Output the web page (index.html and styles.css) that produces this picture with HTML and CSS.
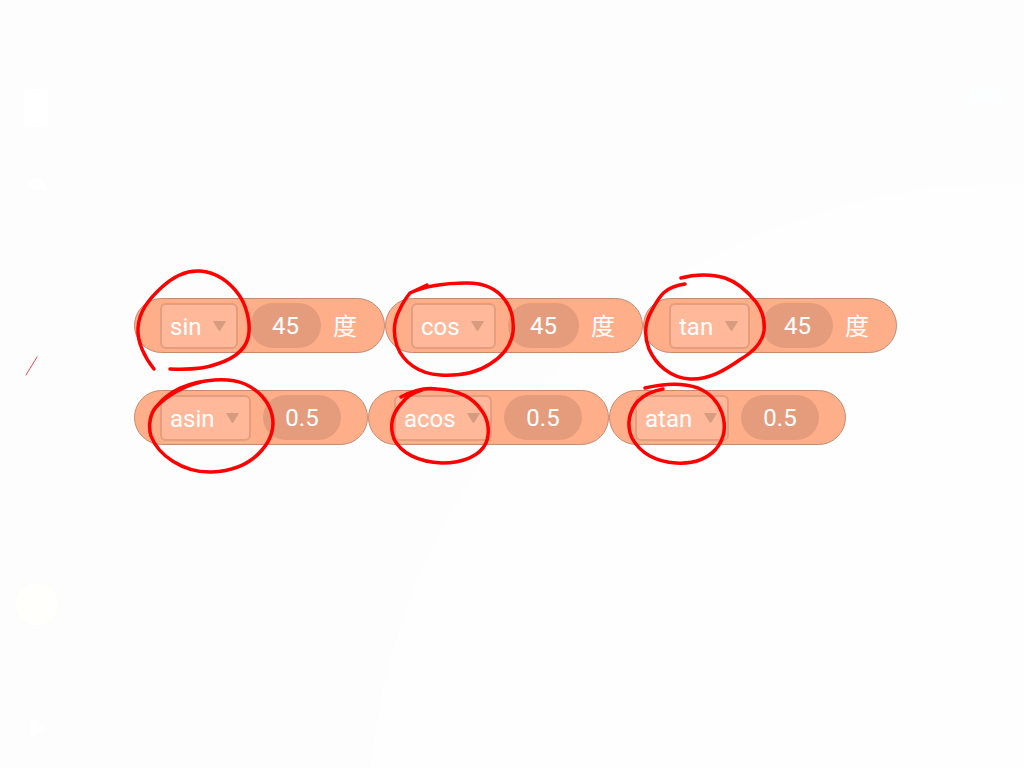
FILE: index.html
```html
<!DOCTYPE html>
<html lang="zh-CN">
<head>
    <meta charset="utf-8">
    <title>sin cos tan</title>
    <link rel="stylesheet" href="styles.css">
</head>
<body>
    <main class="workspace">
        <svg class="backdrop" width="1024" height="768" viewBox="0 0 1024 768" aria-hidden="true">
            <circle cx="1010" cy="826" r="642" fill="#fefefe"/>
            <rect x="24" y="89" width="24" height="38" rx="3" fill="#ffffff"/>
            <path d="M26 183l8-7v3h7l6 10h-13v2z" fill="#ffffff"/>
            <path d="M969 104v-12l6-4h22l5 5v11h-9l-4-4h-10l-3 4z" fill="#fcffff"/>
            <circle cx="37" cy="604" r="21" fill="#fffffb"/>
            <path d="M31 717l15 10-15 10z" fill="#ffffff"/>
        </svg>

        <div class="row">
            <div class="block">
                <div class="picker">
                    <select class="func" aria-label="sin"><option>sin</option></select>
                    <svg class="arrow" viewBox="0 0 13 10"><path d="M1 0h11q1 0 .6 1L7.200 9.400q-.7 1-1.400 0L.4 1Q0 0 1 0z"/></svg>
                </div>
                <input class="value" id="sin_deg" type="text" value="45">
                <label class="unit" for="sin_deg">度</label>
            </div>
            <div class="block">
                <div class="picker">
                    <select class="func" aria-label="cos"><option>cos</option></select>
                    <svg class="arrow" viewBox="0 0 13 10"><path d="M1 0h11q1 0 .6 1L7.200 9.400q-.7 1-1.400 0L.4 1Q0 0 1 0z"/></svg>
                </div>
                <input class="value" id="cos_deg" type="text" value="45">
                <label class="unit" for="cos_deg">度</label>
            </div>
            <div class="block">
                <div class="picker">
                    <select class="func" aria-label="tan"><option>tan</option></select>
                    <svg class="arrow" viewBox="0 0 13 10"><path d="M1 0h11q1 0 .6 1L7.200 9.400q-.7 1-1.400 0L.4 1Q0 0 1 0z"/></svg>
                </div>
                <input class="value" id="tan_deg" type="text" value="45">
                <label class="unit" for="tan_deg">度</label>
            </div>
        </div>

        <div class="row">
            <div class="block">
                <div class="picker">
                    <select class="func" aria-label="asin"><option>asin</option></select>
                    <svg class="arrow" viewBox="0 0 13 10"><path d="M1 0h11q1 0 .6 1L7.200 9.400q-.7 1-1.400 0L.4 1Q0 0 1 0z"/></svg>
                </div>
                <input class="value value_wide" type="text" value="0.5" aria-label="asin">
            </div>
            <div class="block">
                <div class="picker">
                    <select class="func" aria-label="acos"><option>acos</option></select>
                    <svg class="arrow" viewBox="0 0 13 10"><path d="M1 0h11q1 0 .6 1L7.200 9.400q-.7 1-1.400 0L.4 1Q0 0 1 0z"/></svg>
                </div>
                <input class="value value_wide" type="text" value="0.5" aria-label="acos">
            </div>
            <div class="block">
                <div class="picker">
                    <select class="func" aria-label="atan"><option>atan</option></select>
                    <svg class="arrow" viewBox="0 0 13 10"><path d="M1 0h11q1 0 .6 1L7.200 9.400q-.7 1-1.400 0L.4 1Q0 0 1 0z"/></svg>
                </div>
                <input class="value value_wide" type="text" value="0.5" aria-label="atan">
            </div>
        </div>

        <!-- red pen marks over the blocks -->
        <svg class="ink" width="1024" height="768" viewBox="0 0 1024 768" stroke-width="3.5" aria-hidden="true">
            <path d="M154 369C145 358 137 342 138 328C139 311 149 299 162 287C174 276 186 270 200 271C216 272 230 282 239 295C246 305 250 320 249 332C248 347 236 358 217 364C204 369 190 370 170 369"/>
            <path d="M427 285L410 293C425 286 446 283 467 283C484 283 497 289 505 300C512 309 514 320 513 332C511 346 503 356 490 364C475 374 458 376 440 375C419 374 403 362 397 346C392 331 394 320 400 309C403 302 406 298 410 293L427 285"/>
            <path d="M681 278C695 274 712 274 725 278C737 282 748 292 756 302C762 310 765 321 764 331C762 343 753 352 741 359C724 371 708 380 690 379C671 378 656 365 649 349C643 334 645 322 652 310C660 295 665 287 685 284"/>
            <path d="M201 382C184 386 169 394 156 407C150 414 148 426 151 436C158 455 183 473 212 472C234 471 251 463 262 450C271 440 275 427 272 415C269 401 258 390 245 384C228 377 202 379 180 388C170 393 163 398 156 407"/>
            <path d="M401 397C412 391 424 387 437 389C459 390 474 399 482 411C489 421 490 433 486 443C480 456 463 463 442 463C418 462 401 453 394 439C389 425 393 413 401 404C407 396 414 392 422 390"/>
            <path d="M645 388C662 384 681 382 698 388C710 393 718 402 722 413C726 425 725 438 716 449C706 460 693 464 676 463C656 462 640 453 632 438C626 425 629 411 638 401C645 394 652 391 663 389"/>
            <path stroke="#ff4048" stroke-width="1" d="M26 375L37 357"/>
        </svg>
    </main>
</body>
</html>
```

FILE: styles.css
```css
* {
    box-sizing: border-box;
}

body {
    margin: 0;
    background-color: #fdfdfd;
    font-family: Roboto, "Noto Sans CJK SC", sans-serif;
    font-size: 24px;
    color: white;
}

.workspace {
    position: relative;
    display: flex;
    flex-direction: column;
    gap: 37px;
    min-height: 100vh;
    padding: 298px 0 0 134px;
    overflow: hidden;
}

.backdrop,
.ink {
    position: absolute;
    top: 0;
    left: 0;
}

.ink {
    fill: none;
    stroke: #fe0000;
    stroke-linecap: round;
    stroke-linejoin: round;
    pointer-events: none;
}

.row {
    position: relative;
    display: flex;
}

.block {
    display: flex;
    align-items: center;
    gap: 12px;
    height: 55px;
    padding: 0 26px 0 25px;
    border: 1px solid #c78a6d;
    border-radius: 28px;
    background-color: #ffae8a;
}

.picker {
    display: grid;
    align-items: center;
}

.func {
    grid-area: 1 / 1;
    appearance: none;
    height: 46px;
    margin: 0;
    padding: 2px 34px 0 8px;
    border: 2px solid #e29e7e;
    border-radius: 6px;
    background-color: #ffb899;
    color: white;
    font: inherit;
}

.arrow {
    grid-area: 1 / 1;
    justify-self: end;
    width: 13px;
    height: 10px;
    margin-right: 12px;
    fill: #d69c80;
    pointer-events: none;
}

.value {
    width: 71px;
    height: 45px;
    padding: 0;
    border: none;
    border-radius: 23px;
    background-color: #e59c7c;
    color: white;
    font: inherit;
    text-align: center;
}

.value_wide {
    width: 78px;
}

.unit {
    width: 25px;
    padding-top: 2px;
    line-height: 36px;
}
```
